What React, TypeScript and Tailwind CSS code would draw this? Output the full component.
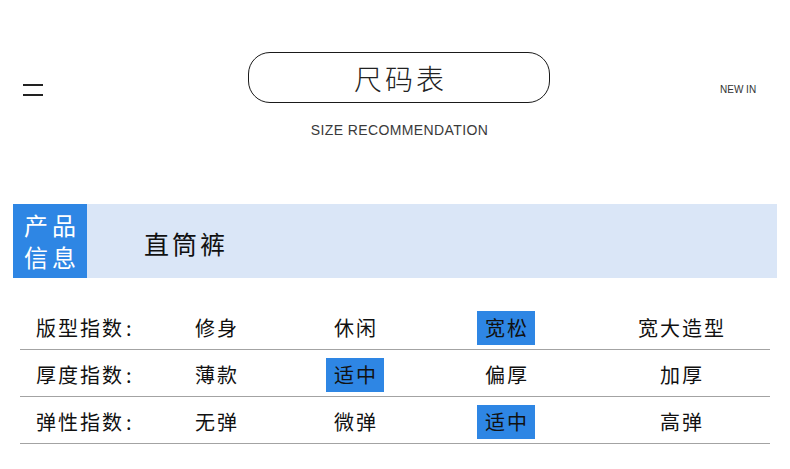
import React from "react";

const cjk = "font-['Noto_Sans_CJK_SC','Noto_Sans',sans-serif]";
const latin = "font-['Liberation_Sans','Noto_Sans_CJK_SC',sans-serif]";

type Row = { label: string; values: string[]; active: number };

const rows: Row[] = [
  { label: "版型指数", values: ["修身", "休闲", "宽松", "宽大造型"], active: 2 },
  { label: "厚度指数", values: ["薄款", "适中", "偏厚", "加厚"], active: 1 },
  { label: "弹性指数", values: ["无弹", "微弹", "适中", "高弹"], active: 2 },
];

const colClass = ["w-[120px]", "w-[158px]", "w-[144px]", "w-[192px] pl-[14px]"];

const Cell = ({ text, on }: { text: string; on: boolean }) =>
  on ? (
    <span className="inline-flex h-[34px] w-[58px] items-center justify-center bg-[#2e86e4] pl-[2px] tracking-[2px]">
      {text}
    </span>
  ) : (
    <span className="pl-[2px] tracking-[2px]">{text}</span>
  );

export default function App() {
  return (
    <div className={`relative h-[469px] w-[790px] overflow-hidden bg-white text-[#111] ${cjk}`}>
      {/* header */}
      <div className="flex items-start pt-[52px]">
        <div className="ml-[23px] mt-[32px] flex w-[20px] flex-col gap-[8.5px]">
          <div className="h-[1.5px] bg-[#222]" />
          <div className="h-[1.5px] bg-[#222]" />
        </div>
        <div className="ml-[205px] flex h-[51px] w-[302px] items-center justify-center rounded-[22px] border border-[#1a1a1a] pl-[3px] text-[28px] font-light tracking-[3px] text-[#222]">
          尺码表
        </div>
        <div className={`ml-[170px] mt-[32px] text-[10px] leading-[12px] text-[#333] ${latin}`}>NEW IN</div>
      </div>
      <div className={`mt-[19px] pl-[9px] text-center text-[14px] leading-[16px] tracking-[0.4px] text-[#3a3a3a] ${latin}`}>
        SIZE RECOMMENDATION
      </div>

      {/* product band */}
      <div className="mx-[13px] mt-[66px] flex h-[74px] bg-[#dae6f7]">
        <div className="flex w-[74px] flex-col items-center justify-center bg-[#2e86e4] pl-[4px] text-[24px] leading-[32px] tracking-[4px] text-white">
          <span>产品</span>
          <span>信息</span>
        </div>
        <div className="flex items-center pl-[57px] pt-[6px] text-[25px] tracking-[3px] text-[#111]">直筒裤</div>
      </div>

      {/* index table */}
      <div className="ml-[20px] mt-[25px] w-[750px] text-[20px]">
        {rows.map((r) => (
          <div key={r.label} className="flex h-[47px] items-center border-b border-[#a3a3a3] pt-[4px]">
            <div className="w-[136px] pl-[16px] tracking-[2px]">
              {r.label}
              <span className="ml-[2px]">:</span>
            </div>
            {r.values.map((v, i) => (
              <div key={v + i} className={`flex justify-center ${colClass[i]}`}>
                <Cell text={v} on={i === r.active} />
              </div>
            ))}
          </div>
        ))}
      </div>
    </div>
  );
}
